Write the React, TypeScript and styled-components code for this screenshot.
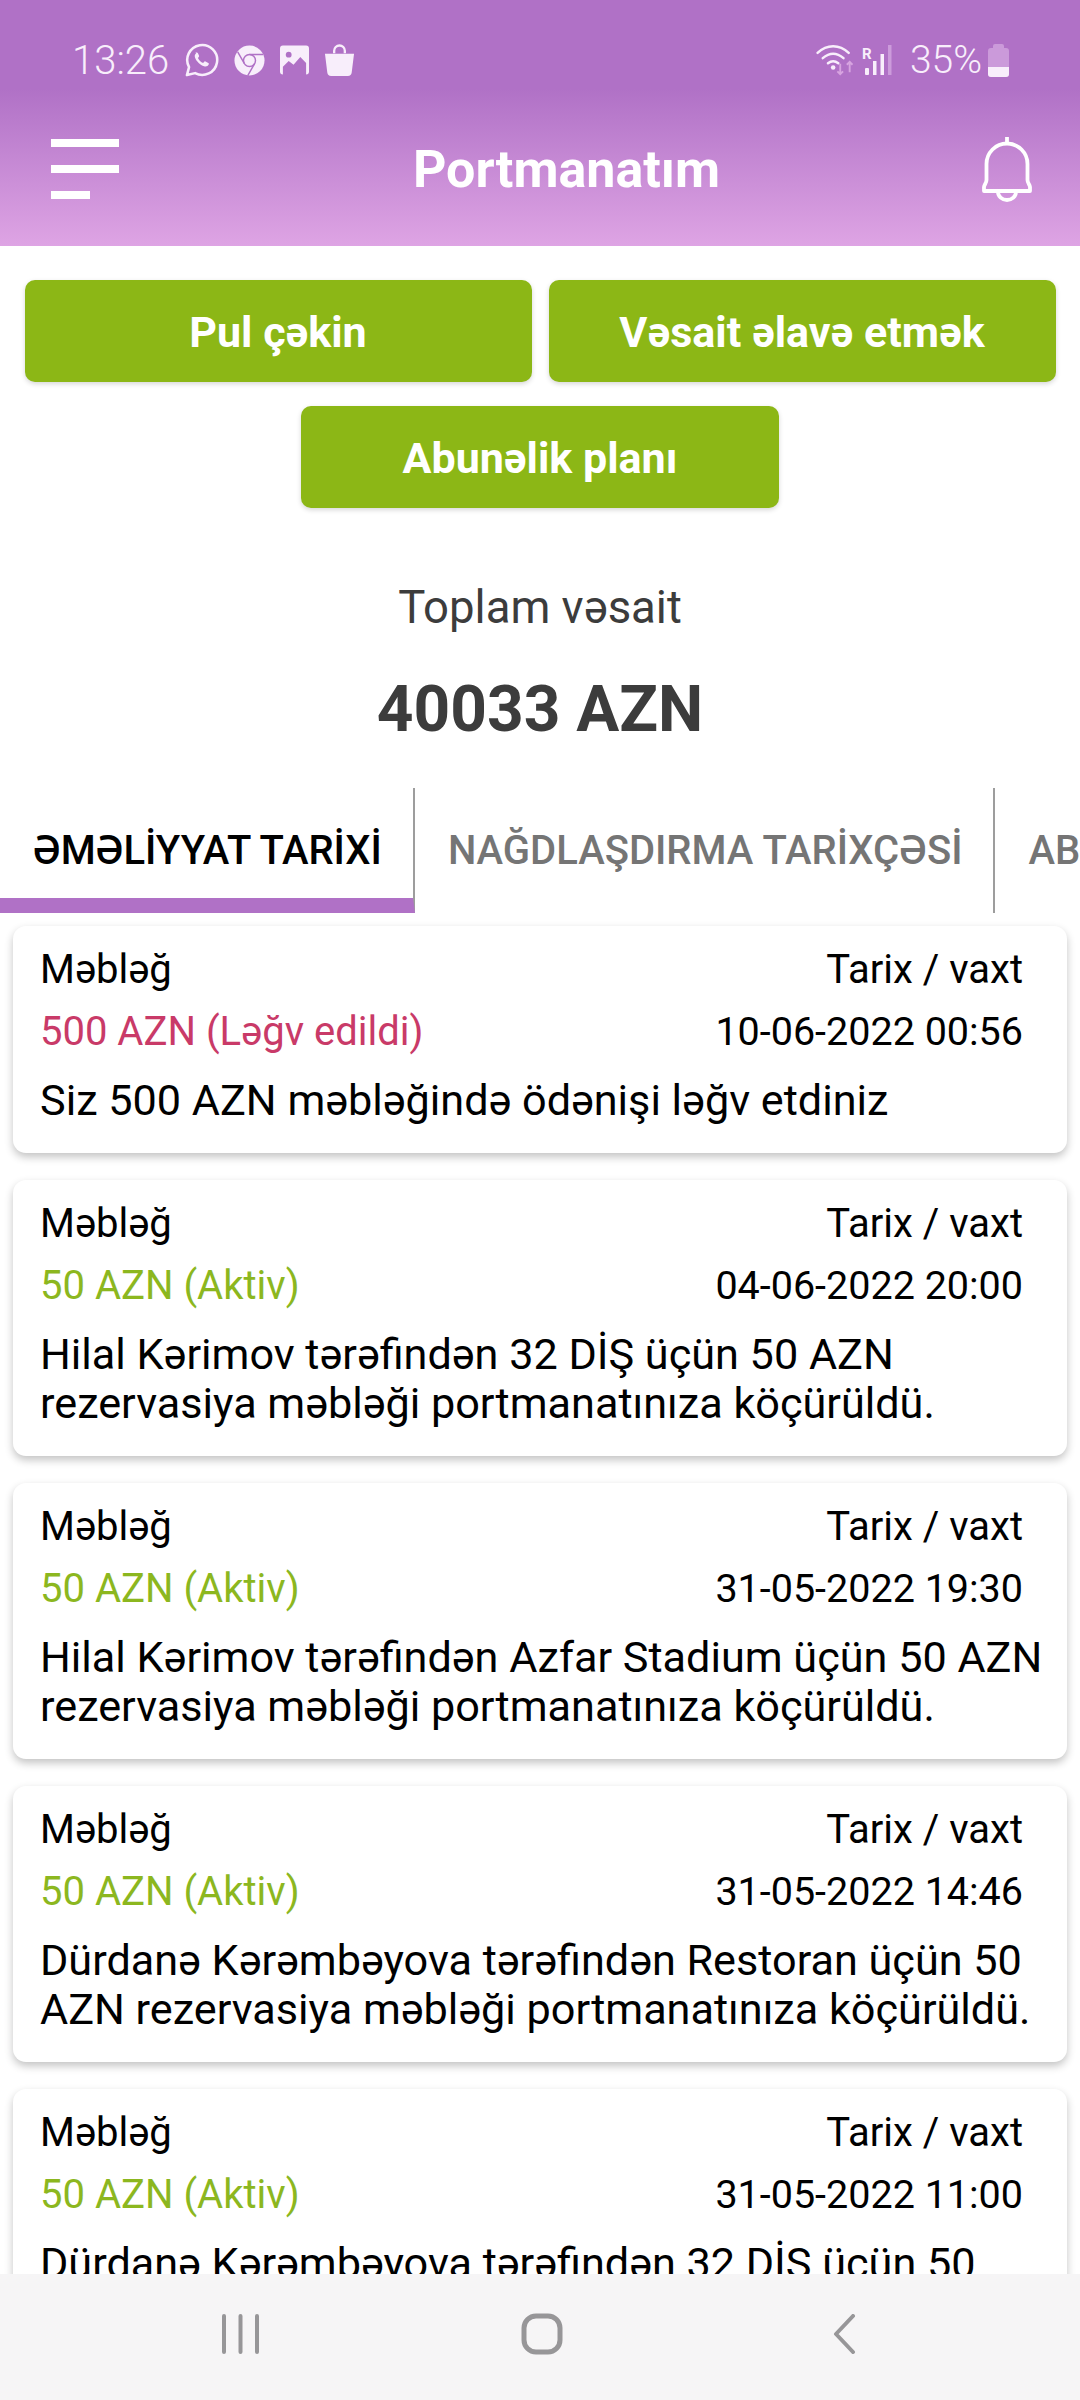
import React from 'react';
import styled, { createGlobalStyle } from 'styled-components';

const GlobalStyle = createGlobalStyle`
  html, body {
    margin: 0;
    padding: 0;
    background: #ffffff;
  }
  * {
    box-sizing: border-box;
  }
`;

const transactions = [
  {
    amount: '500 AZN (Ləğv edildi)',
    cancelled: true,
    date: '10-06-2022 00:56',
    text: 'Siz 500 AZN məbləğində ödənişi ləğv etdiniz',
  },
  {
    amount: '50 AZN (Aktiv)',
    date: '04-06-2022 20:00',
    text: 'Hilal Kərimov tərəfindən 32 DİŞ üçün 50 AZN rezervasiya məbləği portmanatınıza köçürüldü.',
  },
  {
    amount: '50 AZN (Aktiv)',
    date: '31-05-2022 19:30',
    text: 'Hilal Kərimov tərəfindən Azfar Stadium üçün 50 AZN rezervasiya məbləği portmanatınıza köçürüldü.',
  },
  {
    amount: '50 AZN (Aktiv)',
    date: '31-05-2022 14:46',
    text: 'Dürdanə Kərəmbəyova tərəfindən Restoran üçün 50 AZN rezervasiya məbləği portmanatınıza köçürüldü.',
  },
  {
    amount: '50 AZN (Aktiv)',
    date: '31-05-2022 11:00',
    text: 'Dürdanə Kərəmbəyova tərəfindən 32 DİŞ üçün 50 AZN rezervasiya məbləği portmanatınıza köçürüldü.',
  },
];

function WhatsappIcon() {
  return (
    <svg width="35" height="35" viewBox="0 0 36 36" fill="none">
      <path
        d="M3 33l2.2-8.2A15.4 15.4 0 1 1 11.4 31z"
        stroke="#f8eefb"
        strokeWidth="2.6"
        strokeLinejoin="round"
      />
      <path
        d="M12.6 10.5c-1.6 1-2 3-1 5.2 1.4 3.2 5 7 9 8.2 2.4.7 4-.3 4.8-1.8.3-.7.2-1.3-.4-1.6l-2.9-1.5c-.6-.3-1-.1-1.4.4l-1 1.2c-2.4-.9-4.4-3-5.4-5.2l.9-1.1c.4-.5.4-.9.2-1.4l-1.2-2.6c-.3-.6-1.5-.8-2.6 0z"
        fill="#f8eefb"
      />
    </svg>
  );
}

function ChromeIcon() {
  return (
    <svg width="31" height="31" viewBox="0 0 32 32">
      <circle cx="16" cy="16" r="15.5" fill="#f8eefb" />
      <circle cx="16" cy="16" r="6.2" fill="none" stroke="#b071c6" strokeWidth="1.5" />
      <path d="M16 9.8h14M10.6 19L3.8 7M21.4 19l-7.2 12.5" stroke="#b071c6" strokeWidth="1.5" />
    </svg>
  );
}

function GalleryIcon() {
  return (
    <svg width="29" height="30" viewBox="0 0 30 30">
      <rect width="30" height="30" rx="3" fill="#f8eefb" />
      <circle cx="9" cy="9.5" r="3" fill="#b071c6" />
      <path d="M3 22l6-6 5 4 7-8 6 6v13H3z" fill="#b071c6" />
    </svg>
  );
}

function BagIcon() {
  return (
    <svg width="31" height="34" viewBox="0 0 32 34" fill="none">
      <path d="M10.5 10V7.5a5.5 5.5 0 0 1 11 0V10" stroke="#f8eefb" strokeWidth="2.4" />
      <path d="M1 10.5h30l-2.4 19.5a4 4 0 0 1-4 3.5H7.4a4 4 0 0 1-4-3.5z" fill="#f8eefb" />
    </svg>
  );
}

function WifiIcon() {
  return (
    <svg width="41" height="34" viewBox="0 0 42 36" fill="none">
      <path d="M2 10.5C12 1 25 1 35 10.5" stroke="#f8eefb" strokeWidth="2.6" strokeLinecap="round" />
      <path d="M7.5 16c7-6 15-6 22 0" stroke="#f8eefb" strokeWidth="2.6" strokeLinecap="round" />
      <path d="M13 21.5c4-3.2 7-3.2 11 0" stroke="#f8eefb" strokeWidth="2.6" strokeLinecap="round" />
      <circle cx="18.5" cy="26" r="2.4" fill="#f8eefb" />
      <path d="M26 22v11M23 30l3 3 3-3" stroke="#d7a4e0" strokeWidth="2" />
      <path d="M36 31V20M33 23l3-3 3 3" stroke="#d7a4e0" strokeWidth="2" />
    </svg>
  );
}

function SignalIcon() {
  return (
    <svg width="32" height="32" viewBox="0 0 32 32">
      <rect x="3" y="24" width="4" height="7" rx="1" fill="#f8eefb" />
      <rect x="11" y="17" width="3.5" height="14" fill="#f8eefb" />
      <rect x="18.5" y="10" width="3.5" height="21" fill="#f8eefb" />
      <rect x="26" y="1" width="3.5" height="30" fill="#cc9bdb" />
      <text x="0" y="15" fontFamily="Roboto, sans-serif" fontWeight="700" fontSize="15" fill="#f8eefb">
        R
      </text>
    </svg>
  );
}

function BatteryIcon() {
  return (
    <svg width="21" height="33" viewBox="0 0 21 33">
      <path d="M7 0h7a2 2 0 0 1 2 2v2h2a3 3 0 0 1 3 3v23a3 3 0 0 1-3 3H3a3 3 0 0 1-3-3V7a3 3 0 0 1 3-3h2V2a2 2 0 0 1 2-2z" fill="#cb9ada" />
      <path d="M0 23h21v7a3 3 0 0 1-3 3H3a3 3 0 0 1-3-3z" fill="#f8eefb" />
    </svg>
  );
}

function BellIcon() {
  return (
    <svg width="50" height="65" viewBox="0 0 50 65" fill="none" stroke="#ffffff" strokeWidth="3.8">
      <path d="M25 0v6" />
      <path
        d="M4.5 27a20.5 20.5 0 0 1 41 0v16c0 3 2.5 5 2.5 7v4H2v-4c0-2 2.5-4 2.5-7z"
        strokeLinejoin="round"
      />
      <path d="M16 55a9 8 0 0 0 18 0" />
    </svg>
  );
}

function App() {
  return (
    <Screen>
      <GlobalStyle />
      <Header>
        <StatusBar>
          <StatusGroup>
            <Clock>13:26</Clock>
            <WhatsappIcon />
            <ChromeIcon />
            <GalleryIcon />
            <BagIcon />
          </StatusGroup>
          <StatusTray>
            <WifiIcon />
            <SignalIcon />
            <Battery>35%</Battery>
            <BatteryIcon />
          </StatusTray>
        </StatusBar>
        <AppBar>
          <Burger>
            <BurgerLine />
            <BurgerLine />
            <BurgerLine $short />
          </Burger>
          <Title>Portmanatım</Title>
          <BellIcon />
        </AppBar>
      </Header>

      <Content>
        <Actions>
          <ActionButton $wide>Pul çəkin</ActionButton>
          <ActionButton $wide>Vəsait əlavə etmək</ActionButton>
          <ActionButton>Abunəlik planı</ActionButton>
        </Actions>

        <BalanceLabel>Toplam vəsait</BalanceLabel>
        <Balance>40033 AZN</Balance>

        <Tabs>
          <Tab $active>ƏMƏLİYYAT TARİXİ</Tab>
          <Tab>NAĞDLAŞDIRMA TARİXÇƏSİ</Tab>
          <Tab>ABUNƏLİK</Tab>
        </Tabs>

        <List>
          {transactions.map((item) => (
            <Card key={item.date}>
              <CardRow>
                <span>Məbləğ</span>
                <span>Tarix / vaxt</span>
              </CardRow>
              <CardRow>
                <Amount $cancelled={item.cancelled}>{item.amount}</Amount>
                <DateValue>{item.date}</DateValue>
              </CardRow>
              <Description>{item.text}</Description>
            </Card>
          ))}
        </List>
      </Content>

      <NavBar>
        <svg width="37" height="40" viewBox="0 0 37 40" stroke="#979698" strokeWidth="4" strokeLinecap="round">
          <path d="M2 2v36M18.5 2v36M35 2v36" />
        </svg>
        <HomeIcon width="42" height="42" viewBox="0 0 42 42" fill="none" stroke="#979698" strokeWidth="5">
          <rect x="3" y="3" width="36" height="36" rx="12" />
        </HomeIcon>
        <svg width="24" height="40" viewBox="0 0 24 40" fill="none" stroke="#979698" strokeWidth="4" strokeLinecap="round" strokeLinejoin="round">
          <path d="M21 2L4 20l17 18" />
        </svg>
      </NavBar>
    </Screen>
  );
}

export default App;

const Screen = styled.div`
  width: 1080px;
  height: 2400px;
  display: flex;
  flex-direction: column;
  overflow: hidden;
  background: #ffffff;
  font-family: Roboto, 'Noto Sans', sans-serif;
`;

const Header = styled.header`
  height: 246px;
  flex: none;
  background: linear-gradient(180deg, #b071c6 0%, #b071c6 36%, #dea4e4 100%);
  color: #ffffff;
`;

const StatusBar = styled.div`
  height: 92px;
  padding: 28px 71px 0 72px;
  display: flex;
  justify-content: space-between;
  align-items: center;
  color: #f8eefb;
`;

const StatusGroup = styled.div`
  display: flex;
  align-items: center;
  gap: 15px;
`;

const StatusTray = styled.div`
  display: flex;
  align-items: center;
  gap: 6px;
`;

const Clock = styled.span`
  font-size: 40px;
  font-weight: 300;
`;

const Battery = styled.span`
  font-size: 39px;
  font-weight: 300;
  margin-left: 10px;
`;

const AppBar = styled.div`
  height: 154px;
  padding: 0 48px 0 51px;
  display: flex;
  align-items: center;
  justify-content: space-between;
`;

const Burger = styled.div`
  width: 70px;
  display: flex;
  flex-direction: column;
  gap: 18px;
`;

const BurgerLine = styled.div<{ $short?: boolean }>`
  width: ${({ $short }) => ($short ? '39px' : '68px')};
  height: 8px;
  background: #ffffff;
`;

const Title = styled.h1`
  margin: 0 0 0 30px;
  font-size: 52px;
  font-weight: 700;
`;

const Content = styled.main`
  flex: 1;
  min-height: 0;
  overflow: hidden;
  display: flex;
  flex-direction: column;
`;

const Actions = styled.div`
  margin-top: 34px;
  padding: 0 24px;
  display: flex;
  flex-wrap: wrap;
  justify-content: center;
  gap: 24px 17px;
`;

const ActionButton = styled.button<{ $wide?: boolean }>`
  width: ${({ $wide }) => ($wide ? '507px' : '478px')};
  height: 102px;
  padding: 2px 0 0;
  border: none;
  border-radius: 10px;
  background: #8cb716;
  box-shadow: 0 2px 5px rgba(0, 0, 0, 0.16);
  color: #ffffff;
  font-family: inherit;
  font-size: 43px;
  font-weight: 700;
`;

const BalanceLabel = styled.div`
  margin-top: 73px;
  text-align: center;
  font-size: 45.5px;
  line-height: 54px;
  color: #3c3c3c;
`;

const Balance = styled.div`
  margin-top: 39px;
  text-align: center;
  font-size: 64px;
  line-height: 72px;
  font-weight: 700;
  color: #3c3c3c;
`;

const Tabs = styled.div`
  margin-top: 42px;
  height: 125px;
  flex: none;
  display: flex;
  overflow: hidden;
`;

const Tab = styled.div<{ $active?: boolean }>`
  flex: none;
  padding: ${({ $active }) => ($active ? '15px' : '0')} 31px 0 33px;
  display: flex;
  align-items: center;
  border-right: 2px solid #9d9d9d;
  border-bottom: ${({ $active }) => ($active ? '15px solid #b071c6' : 'none')};
  font-size: 40px;
  font-weight: 500;
  color: ${({ $active }) => ($active ? '#000000' : '#757575')};
`;

const List = styled.div`
  margin-top: 13px;
  padding: 0 13px;
  display: flex;
  flex-direction: column;
  gap: 27px;
`;

const Card = styled.article`
  flex: none;
  padding: 21px 18px 28px 27px;
  border-radius: 13px;
  background: #ffffff;
  box-shadow: 0 4px 8px rgba(0, 0, 0, 0.24);
  color: #000000;
  font-size: 40px;
`;

const CardRow = styled.div`
  display: flex;
  justify-content: space-between;
  padding-right: 26px;
  line-height: 46px;
  margin-bottom: 16px;
`;

const Amount = styled.span<{ $cancelled?: boolean }>`
  color: ${({ $cancelled }) => ($cancelled ? '#c93a68' : '#8cb71f')};
`;

const DateValue = styled.span`
  font-size: 39.5px;
`;

const Description = styled.p`
  margin: 21px 0 0;
  font-size: 43.2px;
  line-height: 49px;
`;

const NavBar = styled.nav`
  height: 126px;
  flex: none;
  padding: 0 224px 6px 222px;
  display: flex;
  align-items: center;
  justify-content: space-between;
  background: #f6f5f6;
`;

const HomeIcon = styled.svg`
  margin-right: 8px;
`;
